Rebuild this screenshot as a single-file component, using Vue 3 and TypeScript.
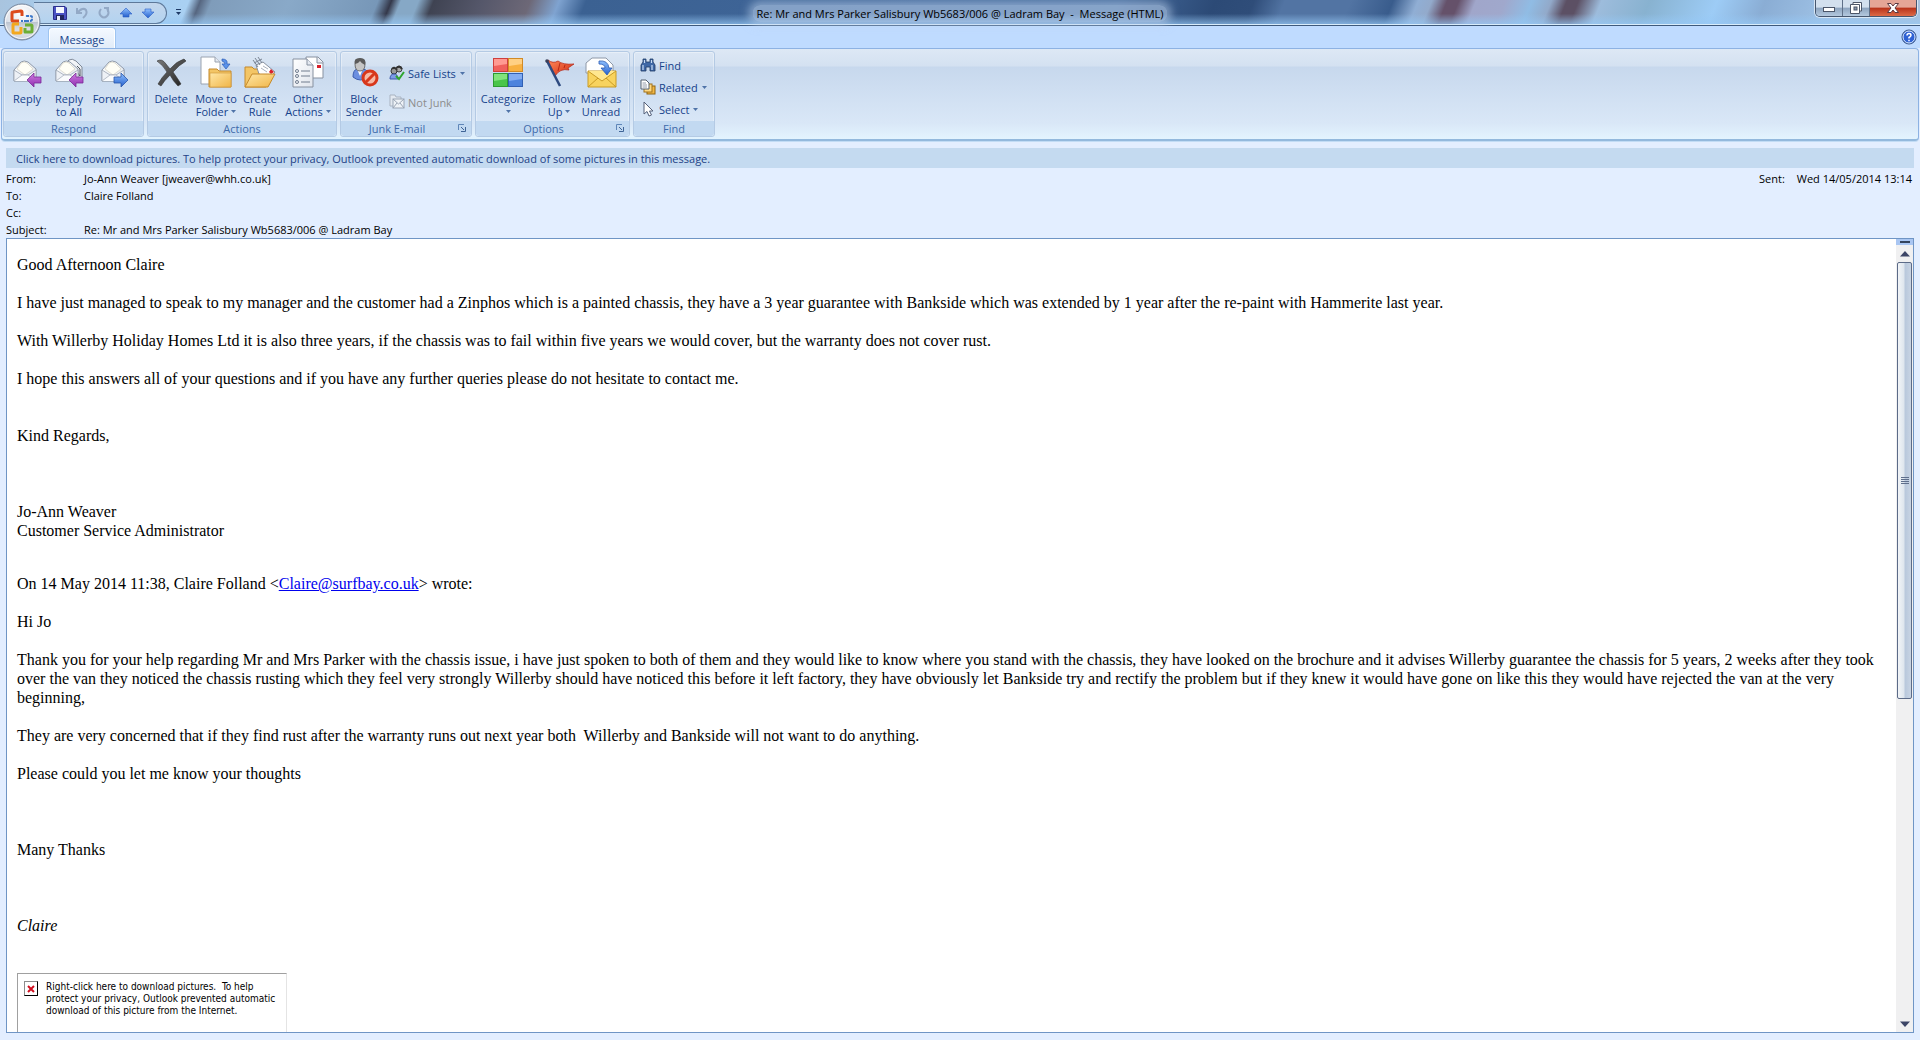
<script setup lang="ts">
interface LargeButton {
  icon: string
  lines: string[]
  menu?: boolean
  size: string
}

interface SmallButton {
  icon: string
  label: string
  menu?: boolean
  disabled?: boolean
}

interface Group {
  name: string
  key: string
  large: LargeButton[]
  small: SmallButton[]
  launcher?: boolean
}

const groups: Group[] = [
  {
    name: 'Respond',
    key: 'respond',
    large: [
      { icon: 'reply', lines: ['Reply'], size: 'w46' },
      { icon: 'reply-all', lines: ['Reply', 'to All'], size: 'w38' },
      { icon: 'forward', lines: ['Forward'], size: 'w52' },
    ],
    small: [],
  },
  {
    name: 'Actions',
    key: 'actions',
    large: [
      { icon: 'delete', lines: ['Delete'], size: 'w46' },
      { icon: 'move', lines: ['Move to', 'Folder'], menu: true, size: 'w44' },
      { icon: 'rule', lines: ['Create', 'Rule'], size: 'w44' },
      { icon: 'other', lines: ['Other', 'Actions'], menu: true, size: 'w52' },
    ],
    small: [],
  },
  {
    name: 'Junk E-mail',
    key: 'junk',
    large: [{ icon: 'block', lines: ['Block', 'Sender'], size: 'w46' }],
    small: [
      { icon: 'safe', label: 'Safe Lists', menu: true },
      { icon: 'notjunk', label: 'Not Junk', disabled: true },
    ],
    launcher: true,
  },
  {
    name: 'Options',
    key: 'options',
    large: [
      { icon: 'categorize', lines: ['Categorize', ''], menu: true, size: 'w64' },
      { icon: 'flag', lines: ['Follow', 'Up'], menu: true, size: 'w38' },
      { icon: 'unread', lines: ['Mark as', 'Unread'], size: 'w46' },
    ],
    small: [],
    launcher: true,
  },
  {
    name: 'Find',
    key: 'find',
    large: [],
    small: [
      { icon: 'find', label: 'Find' },
      { icon: 'related', label: 'Related', menu: true },
      { icon: 'select', label: 'Select', menu: true },
    ],
  },
]

const quickAccess = [
  { icon: 'save', title: 'Save' },
  { icon: 'undo', title: 'Undo' },
  { icon: 'redo', title: 'Redo' },
  { icon: 'up', title: 'Previous Item' },
  { icon: 'down', title: 'Next Item' },
]

const headers = [
  { label: 'From:', value: 'Jo-Ann Weaver [jweaver@whh.co.uk]' },
  { label: 'To:', value: 'Claire Folland' },
  { label: 'Cc:', value: '' },
  { label: 'Subject:', value: 'Re: Mr and Mrs Parker Salisbury Wb5683/006 @ Ladram Bay' },
]

const visibleShare = 58
</script>

<template>
  <div class="window">
    <svg class="sprite" aria-hidden="true">
      <defs>
        <linearGradient id="g-paper" x1="0" y1="0" x2="1" y2="1">
          <stop offset="0" stop-color="#ffffff" /><stop offset="1" stop-color="#dfe4ec" />
        </linearGradient>
        <linearGradient id="g-folder" x1="0" y1="0" x2="1" y2="1">
          <stop offset="0" stop-color="#ffe7a6" /><stop offset="1" stop-color="#f0b548" />
        </linearGradient>
        <linearGradient id="g-purple" x1="0" y1="0" x2="0" y2="1">
          <stop offset="0" stop-color="#cf7be0" /><stop offset="1" stop-color="#8f2fb0" />
        </linearGradient>
        <linearGradient id="g-blue" x1="0" y1="0" x2="0" y2="1">
          <stop offset="0" stop-color="#8fc0ff" /><stop offset="1" stop-color="#2560cc" />
        </linearGradient>
        <linearGradient id="g-red" x1="0" y1="0" x2="1" y2="1">
          <stop offset="0" stop-color="#ff8a5c" /><stop offset="1" stop-color="#d0260c" />
        </linearGradient>
        <linearGradient id="g-dark" x1="0" y1="0" x2="1" y2="1">
          <stop offset="0" stop-color="#7a7a7a" /><stop offset="1" stop-color="#1e1e1e" />
        </linearGradient>
        <radialGradient id="g-orb" cx="0.5" cy="0.25" r="0.8">
          <stop offset="0" stop-color="#ffffff" /><stop offset="0.55" stop-color="#dfe3ea" /><stop offset="1" stop-color="#9aa5b5" />
        </radialGradient>
        <linearGradient id="g-orbshade" x1="0" y1="0" x2="0" y2="1">
          <stop offset="0" stop-color="#b9c1cd" /><stop offset="1" stop-color="#ffffff" stop-opacity="0.4" />
        </linearGradient>
      </defs>

      <symbol id="i-envelope" viewBox="0 0 32 32">
        <path d="M3 14 10 6Q13 4 17 6L25 13V25H3Z" fill="url(#g-paper)" stroke="#8f99a8" />
        <path d="M6 13 10 7Q13 5 16 7L22 13 14 19Z" fill="#fffef6" stroke="#d5d3c4" stroke-width=".7" />
        <path d="M3 14 11 19H17L25 14V25H3Z" fill="#eef1f6" stroke="#9ca5b3" stroke-width=".8" />
        <path d="M3 25 11 19H17L25 25" fill="#fafbfd" stroke="#a8b0bc" stroke-width=".8" />
      </symbol>
      <symbol id="i-arrow-left" viewBox="0 0 32 32">
        <path d="M16 24 23 17V21H30V27H23V31Z" fill="url(#g-purple)" stroke="#7a2a98" stroke-width=".8" />
      </symbol>
      <symbol id="i-reply" viewBox="0 0 32 32">
        <use href="#i-envelope" /><use href="#i-arrow-left" />
      </symbol>
      <symbol id="i-reply-all" viewBox="0 0 32 32">
        <path d="M9 11 16 4Q19 2 23 5L29 11V22H10Z" fill="url(#g-paper)" stroke="#7f8998" />
        <path d="M24 10 27 13V20L24 16" fill="none" stroke="#3f4650" stroke-width=".9" />
        <use href="#i-envelope" /><use href="#i-arrow-left" />
      </symbol>
      <symbol id="i-forward" viewBox="0 0 32 32">
        <use href="#i-envelope" x="1" />
        <path d="M30 24 23 17V21H16V27H23V31Z" fill="url(#g-blue)" stroke="#2a56a8" stroke-width=".8" />
      </symbol>
      <symbol id="i-delete" viewBox="0 0 32 32">
        <path d="M2 5Q7 2 11 8L15 13Q22 5 29 3L31 5Q24 9 18 16Q23 23 26 28L23 30Q18 25 15 19Q9 25 6 30L3 28Q7 21 12 16Q8 9 2 5Z" fill="url(#g-dark)" stroke="#333" stroke-width=".6" />
      </symbol>
      <symbol id="i-move" viewBox="0 0 32 32">
        <path d="M1 1H15L20 6V28H1Z" fill="#fff" stroke="#9aa3b0" /><path d="M15 1V6H20" fill="#e4e9f1" stroke="#9aa3b0" />
        <path d="M9 13H17L19 15H31V31H9Z" fill="#f3c565" stroke="#c58a2c" /><path d="M10 17H31V31H10Z" fill="url(#g-folder)" stroke="#cf9638" stroke-width=".6" />
        <path d="M22 3Q28 3 27 8H30L26 13 22 8H25Q25 6 22 5Z" fill="#5b93ea" stroke="#2b5cb4" stroke-width=".7" />
      </symbol>
      <symbol id="i-rule" viewBox="0 0 32 32">
        <path d="M1 11H8L10 13H22V31H1Z" fill="#f3c565" stroke="#c58a2c" />
        <path d="M12 9 19 6 31 16 25 23 15 18Z" fill="#fff" stroke="#8a93a1" /><path d="M9 4 14 11M11 2 16 9M14 1 18 7M10 7 18 3" stroke="#7b8594" fill="none" />
        <path d="M27 13 30 16 27 18 25 16Z" fill="#d8202a" /><path d="M17 12 23 16M19 10 24 13" stroke="#aab2bf" />
        <path d="M1 31 8 18H31L24 31Z" fill="url(#g-folder)" stroke="#c58a2c" />
      </symbol>
      <symbol id="i-other" viewBox="0 0 32 32">
        <path d="M14 1H26L31 6V22H14Z" fill="#fff" stroke="#8791a0" /><path d="M25 1V7H31" fill="#e7ecf3" stroke="#8791a0" /><rect x="25" y="9" width="4" height="3" fill="#d8202a" />
        <path d="M1 3H15L21 9V31H1Z" fill="url(#g-paper)" stroke="#8791a0" /><path d="M15 3V9H21" fill="#e4e9f1" stroke="#8791a0" />
        <path d="M9 15H18M9 20H18M9 26H18" stroke="#707c8e" /><circle cx="5" cy="15" r="1.500" fill="none" stroke="#707c8e" /><circle cx="5" cy="20" r="1.500" fill="none" stroke="#707c8e" /><circle cx="5" cy="26" r="1.500" fill="none" stroke="#707c8e" />
      </symbol>
      <symbol id="i-block" viewBox="0 0 32 32">
        <path d="M5 21Q5 14 9 13H15Q21 14 21 21Q12 27 5 21Z" fill="#6c8fe0" stroke="#3b5cae" /><path d="M9 13 12 20 15 13Z" fill="#fff" />
        <path d="M7 8Q7 3 12 3Q17 3 17 8Q17 15 12 15Q7 15 7 8Z" fill="#c5c5c5" stroke="#6d6d6d" /><path d="M7 8Q5 2 12 2Q19 2 17 9Q13 7 12 5Q10 8 7 8Z" fill="#5b5b5b" />
        <circle cx="22" cy="22" r="7" fill="#f6b9a6" stroke="#d8371b" stroke-width="3" /><path d="M17 27 27 17" stroke="#d8371b" stroke-width="3" />
      </symbol>
      <symbol id="i-safe" viewBox="0 0 16 16">
        <circle cx="10" cy="4" r="3" fill="#aaa" stroke="#444" /><circle cx="5" cy="6" r="3" fill="#999" stroke="#333" />
        <path d="M3 4Q5 1 8 5M8 3Q10 0 13 4" stroke="#333" stroke-width="2" fill="none" />
        <path d="M1 14Q1 9 5 9Q9 9 9 14Z" fill="#7d9be8" stroke="#3c58a8" />
        <path d="M7 11 10 14 15 7" fill="none" stroke="#2fa52c" stroke-width="2" />
      </symbol>
      <symbol id="i-notjunk" viewBox="0 0 16 16">
        <path d="M1 1H6L7 3H12V12H1Z" fill="#e3e9f1" stroke="#a9b3c1" /><rect x="4" y="5" width="11" height="9" fill="#eef2f7" stroke="#9aa5b5" /><path d="M4 5 9.500 10 15 5M4 14 8 9M15 14 11 9" fill="none" stroke="#9aa5b5" />
      </symbol>
      <symbol id="i-categorize" viewBox="0 0 32 32">
        <rect x="1.500" y="2.500" width="14" height="13" fill="#f0605c" stroke="#cf3f3d" /><path d="M2 3H15V8L2 10Z" fill="#ff9a92" />
        <rect x="16.500" y="2.500" width="14" height="13" fill="#f8b040" stroke="#d18a26" /><path d="M17 3H30V8L17 10Z" fill="#ffd084" />
        <rect x="1.500" y="17.500" width="14" height="13" fill="#49c54a" stroke="#2d9a32" /><path d="M2 18H15V23L2 25Z" fill="#82e37c" />
        <rect x="16.500" y="17.500" width="14" height="13" fill="#4c83dd" stroke="#3160b4" /><path d="M17 18H30V23L17 25Z" fill="#82acf2" />
      </symbol>
      <symbol id="i-flag" viewBox="0 0 32 32">
        <path d="M5 4Q10 8 15 5Q20 9 31 8L25 12 26 14Q17 12 12 20Z" fill="url(#g-red)" stroke="#b22010" stroke-width=".7" />
        <path d="M17 7 15 15M22 9 21 12" stroke="#a81c0c" stroke-width=".8" />
        <path d="M4 5 17 30" stroke="#2d4a80" stroke-width="2.500" /><circle cx="4" cy="5" r="1.800" fill="#3a3f58" />
      </symbol>
      <symbol id="i-unread" viewBox="0 0 32 32">
        <path d="M1 17V7L7 2H21L28 9V17Z" fill="#fff" stroke="#8e98a7" />
        <path d="M3 15H31V31H3Z" fill="#f8d35e" stroke="#c99b25" /><path d="M3 15 17 25 31 15" fill="#ffe78f" stroke="#c99b25" /><path d="M3 31 13 22M31 31 21 22" stroke="#c99b25" />
        <path d="M14 5Q23 4 24 12H27L22 19 16 12H20Q20 8 14 8Z" fill="url(#g-blue)" stroke="#2b5cb4" stroke-width=".8" />
      </symbol>
      <symbol id="i-find" viewBox="0 0 16 16">
        <path d="M3 2H6V5H10V2H13V5L15 8V14H10V10H6V14H1V8L3 5Z" fill="#3f68a6" stroke="#1e3a66" stroke-width=".8" /><path d="M3 8V13M12 8V13M4.500 3V6M11.500 3V6" stroke="#c8dcf6" stroke-width="1.200" />
      </symbol>
      <symbol id="i-related" viewBox="0 0 16 16">
        <rect x="7" y="7" width="8" height="8" fill="#f3b844" stroke="#8f6412" /><rect x="4" y="5" width="8" height="8" fill="#ffd983" stroke="#a0701a" />
        <path d="M1 1H6L9 4V10H1Z" fill="#fff" stroke="#55606f" /><path d="M2.500 4H6M2.500 6H7M2.500 8H7" stroke="#7a8494" stroke-width=".8" />
      </symbol>
      <symbol id="i-select" viewBox="0 0 16 16">
        <path d="M4 1V13L7 10.500 9 15 11.500 14 9.500 10H13Z" fill="#fff" stroke="#54607a" />
      </symbol>
      <symbol id="i-save" viewBox="0 0 16 16">
        <path d="M1.500 1.500H13L14.500 3V14.500H1.500Z" fill="#4a52c4" stroke="#2c2f8c" /><rect x="4" y="2" width="8" height="6" fill="#f4f7ff" /><rect x="4" y="10" width="8" height="5" fill="#20255e" /><rect x="5" y="11" width="3" height="4" fill="#e8ecfa" />
      </symbol>
      <symbol id="i-undo" viewBox="0 0 16 16">
        <path d="M3 3V8H8M4 7Q9 2 12 5Q14 9 9 13" fill="none" stroke="#93a9c6" stroke-width="2" />
      </symbol>
      <symbol id="i-redo" viewBox="0 0 16 16">
        <path d="M8 3H12V7M11 4Q14 8 11 11Q8 14 5 11Q2 8 5 4" fill="none" stroke="#93a9c6" stroke-width="2" />
      </symbol>
      <symbol id="i-up" viewBox="0 0 16 16">
        <path d="M8 3 14 9H11V12H5V9H2Z" fill="url(#g-blue)" stroke="#2a5dc4" stroke-width=".6" />
      </symbol>
      <symbol id="i-down" viewBox="0 0 16 16">
        <path d="M8 13 14 7H11V4H5V7H2Z" fill="url(#g-blue)" stroke="#2a5dc4" stroke-width=".6" />
      </symbol>
      <symbol id="i-caret" viewBox="0 0 5 3"><path d="M0 0H5L2.500 3Z" fill="currentColor" /></symbol>
    </svg>

    <header class="titlebar">
      <nav class="quick" aria-label="Quick Access Toolbar">
        <button v-for="q in quickAccess" :key="q.icon" class="quick-btn" :title="q.title">
          <svg width="16" height="16"><use :href="`#i-${q.icon}`" /></svg>
        </button>
      </nav>
      <button class="customize" title="Customize Quick Access Toolbar">
        <svg width="7" height="7" viewBox="0 0 7 7"><path d="M1 .5H6" stroke="#1e3a66" /><path d="M1 3H6L3.500 6Z" fill="#1e3a66" /></svg>
      </button>
      <h1 class="title">Re: Mr and Mrs Parker Salisbury Wb5683/006 @ Ladram Bay&nbsp; -&nbsp; Message (HTML)</h1>
      <div class="controls">
        <button class="ctl min" title="Minimize">
          <svg width="14" height="12" viewBox="0 0 14 12"><rect x="1.500" y="5.500" width="11" height="4" fill="#fff" stroke="#4c5669" /></svg>
        </button>
        <button class="ctl restore" title="Restore Down">
          <svg width="14" height="14" viewBox="0 0 14 14"><path d="M4 1.500H12.500V10H10.500V12.500H1.500V3.500H4Z" fill="#fff" stroke="#4c5669" /><rect x="5" y="6" width="3" height="3" fill="#8696ad" stroke="#4c5669" /><path d="M4 3.500H10.500V10" fill="none" stroke="#4c5669" /></svg>
        </button>
        <button class="ctl close" title="Close">
          <svg width="14" height="12" viewBox="0 0 14 12"><path d="M1.500 1.500H5L7 4 9 1.500H12.500L9 6 12.500 10.500H9L7 8 5 10.500H1.500L5 6Z" fill="#fff" stroke="#5b3a42" /></svg>
        </button>
      </div>
    </header>

    <button class="orb" title="Office Button">
      <svg width="40" height="40" viewBox="0 0 40 40">
        <circle cx="20" cy="20" r="18" fill="url(#g-orb)" stroke="#76869d" />
        <path d="M3 20A17 17 0 0 0 37 20Z" fill="url(#g-orbshade)" />
        <circle cx="20" cy="20" r="16.500" fill="none" stroke="#fff" stroke-opacity=".8" />
        <g fill="none" stroke-linejoin="round">
          <path d="M17 19H11Q10 19 10 18V11Q10 10 11 10L19 9Q20 9 20 10V14" stroke="#dc4a1c" stroke-width="3" />
          <path d="M24 19H28Q30 19 30 17V15Q30 14 28 14H23" stroke="#3a76c8" stroke-width="2" stroke-dasharray="3 1" />
          <path d="M17 22H12Q11 22 11 23V30Q11 31 12 31H18Q19 31 19 30V25" stroke="#f3a81e" stroke-width="3" />
          <path d="M23 23H29Q30 23 30 24V29Q30 30 29 30H23V26" stroke="#6cae35" stroke-width="3" />
          <path d="M19 19H21M22 19H24" stroke="#3a76c8" stroke-width="2" />
        </g>
      </svg>
    </button>

    <div class="tabs">
      <button class="tab">Message</button>
      <button class="help" title="Help">
        <svg width="16" height="16" viewBox="0 0 16 16">
          <circle cx="8" cy="8" r="7" fill="#2f62d4" stroke="#34507e" /><circle cx="8" cy="8" r="6" fill="none" stroke="#dcebff" />
          <path d="M6 6.500Q6 4.500 8 4.500Q10 4.500 10 6.200Q10 7.300 8 8.500V9.500M8 10.800V12.200" fill="none" stroke="#fff" stroke-width="1.500" />
        </svg>
      </button>
    </div>

    <section class="ribbon" aria-label="Message ribbon">
      <div v-for="g in groups" :key="g.key" class="group" :class="g.key">
        <div class="group-body">
          <button v-for="b in g.large" :key="b.icon" class="large" :class="b.size">
            <svg width="32" height="32"><use :href="`#i-${b.icon}`" /></svg>
            <span v-for="(line, i) in b.lines" :key="i" class="line">
              {{ line }}<svg v-if="b.menu && i === b.lines.length - 1" class="caret" width="5" height="3"><use href="#i-caret" /></svg>
            </span>
          </button>
          <div v-if="g.small.length" class="stack">
            <button v-for="s in g.small" :key="s.icon" class="small" :disabled="s.disabled">
              <svg width="16" height="16"><use :href="`#i-${s.icon}`" /></svg>
              <span>{{ s.label }}</span>
              <svg v-if="s.menu" class="caret" width="5" height="3"><use href="#i-caret" /></svg>
            </button>
          </div>
        </div>
        <div class="group-name">
          <span>{{ g.name }}</span>
          <button v-if="g.launcher" class="launcher" :title="`${g.name} options`">
            <svg width="8" height="8" viewBox="0 0 8 8"><path d="M.5 6V.5H6" fill="none" stroke="#5f86b8" /><path d="M3 3 6 6M7.500 3V7.500H3" fill="none" stroke="#3f6496" /></svg>
          </button>
        </div>
      </div>
    </section>

    <main class="message">
      <button class="infobar">Click here to download pictures. To help protect your privacy, Outlook prevented automatic download of some pictures in this message.</button>
      <div class="meta">
        <dl class="fields">
          <template v-for="h in headers" :key="h.label">
            <dt>{{ h.label }}</dt>
            <dd>{{ h.value }}</dd>
          </template>
        </dl>
        <dl class="sent">
          <dt>Sent:</dt>
          <dd>Wed 14/05/2014 13:14</dd>
        </dl>
      </div>

      <div class="pane">
        <article class="body">
          <p>Good Afternoon Claire</p>
          <p>I have just managed to speak to my manager and the customer had a Zinphos which is a painted chassis, they have a 3 year guarantee with Bankside which was extended by 1 year after the re-paint with Hammerite last year.</p>
          <p>With Willerby Holiday Homes Ltd it is also three years, if the chassis was to fail within five years we would cover, but the warranty does not cover rust.</p>
          <p>I hope this answers all of your questions and if you have any further queries please do not hesitate to contact me.</p>
          <p class="closing">Kind Regards,</p>
          <p class="signature">Jo-Ann Weaver<br />Customer Service Administrator</p>
          <p class="quote-head">On 14 May 2014 11:38, Claire Folland &lt;<a href="mailto:Claire@surfbay.co.uk">Claire@surfbay.co.uk</a>&gt; wrote:</p>
          <p>Hi Jo</p>
          <p>Thank you for your help regarding Mr and Mrs Parker with the chassis issue, i have just spoken to both of them and they would like to know where you stand with the chassis, they have looked on the brochure and it advises Willerby guarantee the chassis for 5 years, 2 weeks after they took over the van they noticed the chassis rusting which they feel very strongly Willerby should have noticed this before it left factory, they have obviously let Bankside try and rectify the problem but if they knew it would have gone on like this they would have rejected the van at the very beginning,</p>
          <p>They are very concerned that if they find rust after the warranty runs out next year both&nbsp; Willerby and Bankside will not want to do anything.</p>
          <p>Please could you let me know your thoughts</p>
          <p class="signature">Many Thanks</p>
          <p class="signature"><em>Claire</em></p>
          <div class="blocked">
            <span class="blocked-icon">
              <svg width="8" height="8" viewBox="0 0 8 8"><path d="M1 1 7 7M7 1 1 7" stroke="#d01020" stroke-width="2" /></svg>
            </span>
            <span>Right-click here to download pictures.&nbsp; To help<br />protect your privacy, Outlook prevented automatic<br />download of this picture from the Internet.</span>
          </div>
        </article>
        <div class="scroll">
          <button class="split" title="Split"></button>
          <button class="step" title="Scroll up">
            <svg width="10" height="6" viewBox="0 0 10 6"><path d="M0 5.500 5 0 10 5.500Z" fill="#3c4566" /></svg>
          </button>
          <div class="track">
            <div class="thumb" :style="{ height: visibleShare + '%' }"><i class="grip"></i></div>
          </div>
          <button class="step" title="Scroll down">
            <svg width="10" height="6" viewBox="0 0 10 6"><path d="M0 .5 5 6 10 .5Z" fill="#3c4566" /></svg>
          </button>
        </div>
      </div>
    </main>
  </div>
</template>

<style>
body {
  margin: 0;
  background: #e3efff;
}
</style>

<style scoped>
.window {
  position: relative;
  display: flex;
  flex-direction: column;
  height: 100vh;
  overflow: hidden;
  background: #e3eeff;
  color: #000;
  font: 11px/13px "Open Sans", "Noto Sans", sans-serif;
}
.sprite {
  position: absolute;
  width: 0;
  height: 0;
}
button {
  margin: 0;
  padding: 0;
  border: 0;
  background: none;
  font: inherit;
  color: inherit;
}
svg {
  display: block;
}

.titlebar {
  position: relative;
  display: flex;
  align-items: flex-start;
  flex: none;
  box-sizing: border-box;
  height: 26px;
  border-bottom: 1px solid #3f5a7c;
  box-shadow: inset 0 -1px #d8ecfb;
  background:
    linear-gradient(180deg, rgba(160, 205, 245, 0) 55%, rgba(150, 200, 245, 0.75) 100%),
    linear-gradient(112deg,
      #a9c4de 0%, #a5cdf0 4%, #a9d0f2 9.8%, #566680 10.4%, #7f9cba 11%, #89a9c8 15%, #7797b8 19.6%,
      #34384a 20.3%, #86a8c6 20.8%, #86a8c6 21.7%, #3f4352 22.5%, #55576a 25%, #6d6877 27.5%,
      #7fa3d0 29%, #3b6192 30.4%, #41679a 48%, #446a9c 58%, #2c4a76 63%, #2f4d79 65%, #5274a3 66.6%,
      #5274a3 70%, #395c8c 72.2%, #90aed4 73.5%, #93aacb 74.2%, #65516a 75%, #65516a 75.6%, #a0a6ca 76.5%,
      #a0a8cc 78%, #90bce4 79.4%, #92a9c9 80.4%, #5c5064 81.2%, #5c5064 81.8%, #9dbcdc 83%,
      #88b2d0 85.5%, #9dccf6 89%, #8aadd4 91.5%, #9fc2e6 95%, #a9c2dc 100%);
}
.quick {
  display: flex;
  gap: 6px;
  box-sizing: border-box;
  height: 22px;
  margin: 2px 0 0 34px;
  padding: 2px 10px 2px 18px;
  border: 1px solid #5d7899;
  border-left: 0;
  border-radius: 0 11px 11px 0;
  background: linear-gradient(#c3d6ec, #b3d3f0);
}
.quick-btn {
  width: 16px;
  height: 16px;
}
.customize {
  margin: 9px 0 0 8px;
}
.title {
  position: absolute;
  top: 5px;
  left: 50%;
  margin: 0;
  padding: 0 4px;
  transform: translateX(-50%);
  background: rgba(190, 212, 238, 0.55);
  border-radius: 8px;
  box-shadow: 0 0 8px 4px rgba(190, 212, 238, 0.55);
  font-size: 11px;
  font-weight: 400;
  line-height: 17px;
  white-space: nowrap;
}
.controls {
  display: flex;
  margin: 0 3px 0 auto;
  border: 1px solid #46566e;
  border-top: 0;
  border-radius: 0 0 5px 5px;
  box-shadow: 0 0 0 1px rgba(255, 255, 255, 0.6);
  overflow: hidden;
}
.ctl {
  display: flex;
  align-items: center;
  justify-content: center;
  width: 27px;
  height: 16px;
  border-right: 1px solid #5f7088;
  background: linear-gradient(#d3e0ee 0 45%, #8da4bf 50%, #b4c8de);
}
.close {
  width: 46px;
  border-right: 0;
  background: linear-gradient(#e5a596 0 45%, #b8321a 50%, #dd6a46);
}
.orb {
  position: absolute;
  top: 2px;
  left: 2px;
}

.tabs {
  display: flex;
  flex: none;
  height: 22px;
  padding-left: 48px;
  background: #bfdbff;
}
.tab {
  height: 23px;
  margin-top: 1px;
  width: 68px;
  border: 1px solid #9ec4f0;
  border-bottom: 0;
  border-radius: 4px 4px 0 0;
  background: linear-gradient(#f4f9ff, #e0ebf8);
  box-shadow: inset 0 0 0 1px #fff;
  color: #15428b;
}
.help {
  margin: 3px 3px 0 auto;
  align-self: flex-start;
}

.ribbon {
  display: flex;
  flex: none;
  gap: 3px;
  height: 86px;
  margin: 0 1px;
  padding: 2px 1px;
  border: 1px solid #8db2e3;
  border-bottom: 2px solid #93b9dd;
  border-radius: 4px;
  background: linear-gradient(#dde8f5 0, #d4e1f1 17px, #c7d8ed 18px, #d9e7f7 74px, #e3f4ff 100%);
  box-shadow: 0 1px #c2dcf5;
  color: #15428b;
}
.group {
  display: flex;
  flex-direction: column;
  box-sizing: border-box;
  height: 86px;
  border: 1px solid #b4cae4;
  border-radius: 3px;
  box-shadow: inset 0 0 0 1px rgba(255, 255, 255, 0.35);
}
.respond { width: 141px; }
.actions { width: 190px; }
.junk { width: 132px; }
.options { width: 155px; }
.find { width: 82px; }
.group-body {
  display: flex;
  flex: 1;
}
.large {
  display: flex;
  flex-direction: column;
  align-items: center;
  padding-top: 4px;
}
.large > svg {
  flex: none;
  margin-bottom: 4px;
}
.w38 { width: 38px; }
.w44 { width: 44px; }
.w46 { width: 46px; }
.w52 { width: 52px; }
.w64 { width: 64px; }
.line {
  display: flex;
  align-items: center;
  gap: 3px;
  height: 13px;
  white-space: nowrap;
}
.caret {
  color: #4f73a8;
}
.stack {
  display: flex;
  flex-direction: column;
  padding: 2px 0 0 2px;
}
.junk .stack {
  gap: 7px;
  padding-top: 10px;
}
.find .stack {
  padding-left: 6px;
}
.small {
  display: flex;
  align-items: center;
  gap: 3px;
  height: 22px;
  white-space: nowrap;
}
.small .caret {
  margin-left: 1px;
}
.small:disabled {
  color: #8d8d8d;
}
.group-name {
  position: relative;
  display: flex;
  justify-content: center;
  height: 15px;
  border-radius: 0 0 3px 3px;
  background: #c2d9f1;
  color: #3e6aaa;
  line-height: 15px;
}
.launcher {
  position: absolute;
  top: 3px;
  right: 5px;
}
.junk .group-name,
.options .group-name {
  padding-right: 18px;
}

.message {
  display: flex;
  flex: 1;
  flex-direction: column;
  min-height: 0;
  padding: 7px 6px;
}
.infobar {
  height: 20px;
  padding: 0 10px;
  background: #c4daf0;
  color: #1e4287;
  text-align: left;
}
.meta {
  display: flex;
  justify-content: space-between;
  padding: 2px 2px 0 0;
}
.meta dl {
  display: grid;
  margin: 0;
  line-height: 17px;
}
.meta dd {
  margin: 0;
}
.fields {
  grid-template-columns: 78px auto;
  grid-auto-rows: 17px;
}
.sent {
  grid-template-columns: auto auto;
  column-gap: 12px;
  align-self: start;
}
.pane {
  display: flex;
  flex: 1;
  min-height: 0;
  border: 1px solid #6f95c5;
  background: #fff;
}
.body {
  flex: 1;
  min-width: 0;
  overflow: hidden;
  padding: 16px 16px 0 10px;
  font: 16px/19px "Liberation Serif", "Times New Roman", serif;
}
.body p {
  margin: 0 0 19px;
}
.body .closing {
  margin-top: 38px;
}
.body .signature {
  margin-top: 57px;
}
.body .quote-head {
  margin-top: 34px;
}
.body a {
  color: #0000ee;
}
.blocked {
  display: flex;
  gap: 8px;
  box-sizing: border-box;
  width: 270px;
  height: 80px;
  margin-top: 38px;
  padding: 7px 0 0 6px;
  border: 1px solid #a0a0a0;
  border-right-color: #e4e4e4;
  font: 10px/12px "DejaVu Sans Condensed", "DejaVu Sans", sans-serif;
  white-space: nowrap;
}
.blocked-icon {
  display: flex;
  align-items: center;
  justify-content: center;
  width: 12px;
  height: 13px;
  border: 1px solid #8c8c8c;
  border-right-color: #000;
  border-bottom-color: #000;
}
.scroll {
  display: flex;
  flex: none;
  flex-direction: column;
  width: 17px;
  background: #f0f0f1;
}
.split {
  height: 6px;
  background: linear-gradient(#34435c, #34435c) center / 10px 2px no-repeat #a9c6f2;
}
.step {
  display: flex;
  align-items: center;
  justify-content: center;
  height: 17px;
}
.track {
  flex: 1;
}
.thumb {
  display: flex;
  align-items: center;
  justify-content: center;
  box-sizing: border-box;
  margin: 0 1px;
  border: 1px solid #5c6b88;
  border-radius: 2px;
  background: linear-gradient(90deg, #f2f5f8, #dfe6ee 45%, #b9c8dc 55%, #c8d4e4);
}
.grip {
  width: 8px;
  height: 7px;
  background: repeating-linear-gradient(#5f6f8c 0 1px, transparent 1px 2px);
}
</style>
